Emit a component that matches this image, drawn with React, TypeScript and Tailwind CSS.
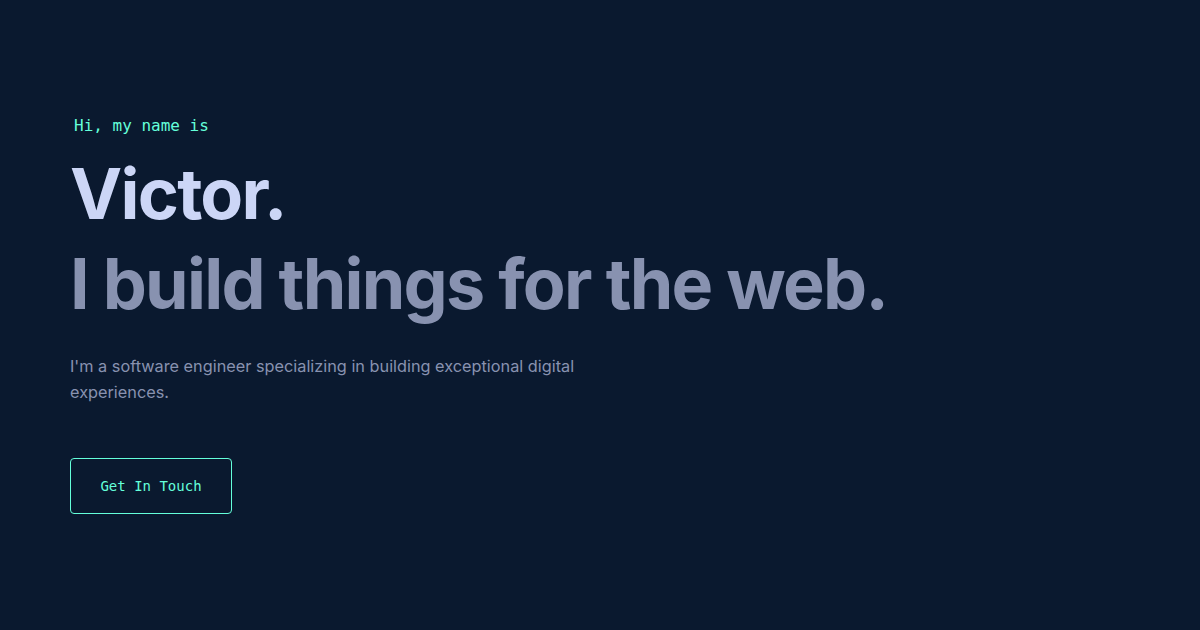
export default function App() {
  return (
    <main className="w-[1200px] h-[630px] bg-[#0a192f] overflow-hidden">
      <section className="flex flex-col items-start pl-[70px] pt-[114px]">
        <p className="ml-1 text-[16px] leading-[24px] text-[#64ffda] font-['DejaVu_Sans_Mono',monospace]">
          Hi, my name is
        </p>
        <h1 className="mt-[11px] text-[70px] leading-[90px] font-bold tracking-[-0.025em] text-[#ccd6f6] font-['Inter',sans-serif]">
          Victor.
        </h1>
        <h2 className="text-[70px] leading-[90px] font-bold tracking-[-0.025em] text-[#8892b0] font-['Inter',sans-serif]">
          I build things for the web.
        </h2>
        <p className="mt-[24px] max-w-[540px] text-[16.3px] leading-[26px] text-[#8892b0] font-['Inter',sans-serif]">
          I'm a software engineer specializing in building exceptional digital experiences.
        </p>
        <a
          href="#contact"
          className="mt-[53px] flex h-[56px] w-[162px] items-center justify-center rounded border border-[#64ffda] text-[14px] text-[#64ffda] font-['DejaVu_Sans_Mono',monospace]"
        >
          Get In Touch
        </a>
      </section>
    </main>
  )
}
